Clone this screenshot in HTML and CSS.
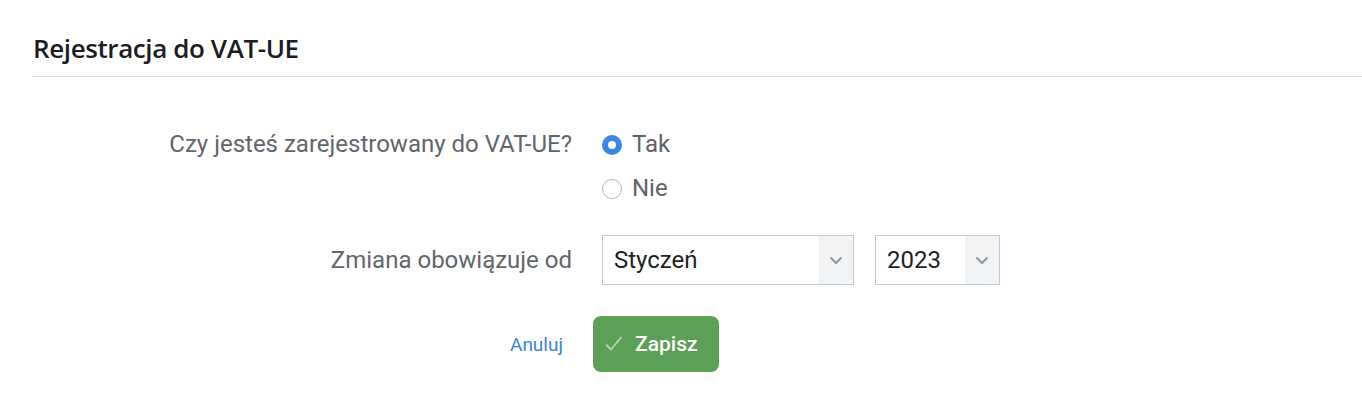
FILE: index.html
```html
<!DOCTYPE html>
<html lang="pl">
<head>
<meta charset="utf-8">
<title>Rejestracja do VAT-UE</title>
<link rel="stylesheet" href="styles.css">
</head>
<body>
<div class="card">
  <div class="card-header">
    <h2 class="title">Rejestracja do VAT-UE</h2>
  </div>
  <form class="form">
    <div class="row row-radio">
      <div class="label">Czy jesteś zarejestrowany do VAT-UE?</div>
      <div class="radios">
        <label class="radio"><span class="dot checked"></span><span class="radio-text">Tak</span></label>
        <label class="radio"><span class="dot"></span><span class="radio-text">Nie</span></label>
      </div>
    </div>
    <div class="row row-select">
      <div class="label">Zmiana obowiązuje od</div>
      <div class="selects">
        <div class="select select-month">
          <span class="select-value">Styczeń</span>
          <span class="select-arrow"><svg width="14" height="9" viewBox="0 0 14 9"><path d="M2 2 L7 7 L12 2" fill="none" stroke="#8b97a3" stroke-width="2" stroke-linecap="round" stroke-linejoin="round"/></svg></span>
        </div>
        <div class="select select-year">
          <span class="select-value">2023</span>
          <span class="select-arrow"><svg width="14" height="9" viewBox="0 0 14 9"><path d="M2 2 L7 7 L12 2" fill="none" stroke="#8b97a3" stroke-width="2" stroke-linecap="round" stroke-linejoin="round"/></svg></span>
        </div>
      </div>
    </div>
    <div class="actions">
      <a class="cancel" href="#">Anuluj</a>
      <button class="save" type="button"><svg class="check" width="18" height="16" viewBox="0 0 18 16"><path d="M1.5 9 L6 13.5 L16 1.5" fill="none" stroke="rgba(255,255,255,0.55)" stroke-width="1.8" stroke-linecap="round" stroke-linejoin="round"/></svg><span>Zapisz</span></button>
    </div>
  </form>
</div>
</body>
</html>
```
FILE: styles.css
```css
html, body {
  margin: 0;
  padding: 0;
  background: #ffffff;
}
body {
  font-family: Roboto, "Liberation Sans", sans-serif;
  width: 1362px;
  height: 407px;
  overflow: hidden;
}
.card {
  padding-left: 32px;
}
.card-header {
  height: 76px;
  border-bottom: 1px solid #e4e4e4;
  box-sizing: content-box;
}
.title {
  margin: 0;
  padding: 30px 0 0 1px;
  font-family: "Open Sans", sans-serif;
  font-weight: 600;
  font-size: 26px;
  line-height: 36px;
  color: #1b1d21;
  letter-spacing: -0.4px;
}
.form {
  padding-top: 47px;
}
.row {
  display: grid;
  grid-template-columns: 540px auto;
  column-gap: 30px;
}
.label {
  text-align: right;
  font-size: 24px;
  line-height: 40px;
  color: #62666c;
}
.radios {
  display: flex;
  flex-direction: column;
  gap: 4px;
}
.radio {
  display: flex;
  align-items: center;
  height: 40px;
}
.dot {
  width: 20px;
  height: 20px;
  box-sizing: border-box;
  border-radius: 50%;
  border: 1px solid #a9b6c4;
  background: #fff;
  margin-right: 10px;
  margin-top: 2px;
}
.dot.checked {
  border: 6px solid #3d86e4;
}
.radio-text {
  font-size: 24px;
  color: #5f6368;
}
.row-select {
  margin-top: 27px;
}
.row-select .label {
  line-height: 50px;
}
.selects {
  display: flex;
  gap: 21px;
}
.select {
  display: flex;
  height: 50px;
  box-sizing: border-box;
  border: 1px solid #bccbd9;
  background: #fff;
}
.select-month {
  width: 252px;
}
.select-year {
  width: 125px;
}
.select-value {
  flex: 1;
  padding-left: 11px;
  font-size: 24px;
  line-height: 48px;
  color: #1e1f22;
}
.select-arrow {
  width: 34px;
  background: #f1f3f5;
  display: flex;
  align-items: center;
  justify-content: center;
}
.actions {
  display: grid;
  grid-template-columns: 531px auto;
  column-gap: 30px;
  align-items: center;
  margin-top: 31px;
}
.cancel {
  justify-self: end;
  font-size: 19px;
  color: #3a84df;
  text-decoration: none;
}
.save {
  display: flex;
  align-items: center;
  width: 126px;
  height: 56px;
  border: none;
  border-radius: 8px;
  background: #5c9f57;
  color: #fff;
  font-family: Roboto, sans-serif;
  font-weight: 500;
  font-size: 21px;
  padding: 0 0 0 12px;
  cursor: pointer;
}
.check {
  margin-right: 12px;
}
```
